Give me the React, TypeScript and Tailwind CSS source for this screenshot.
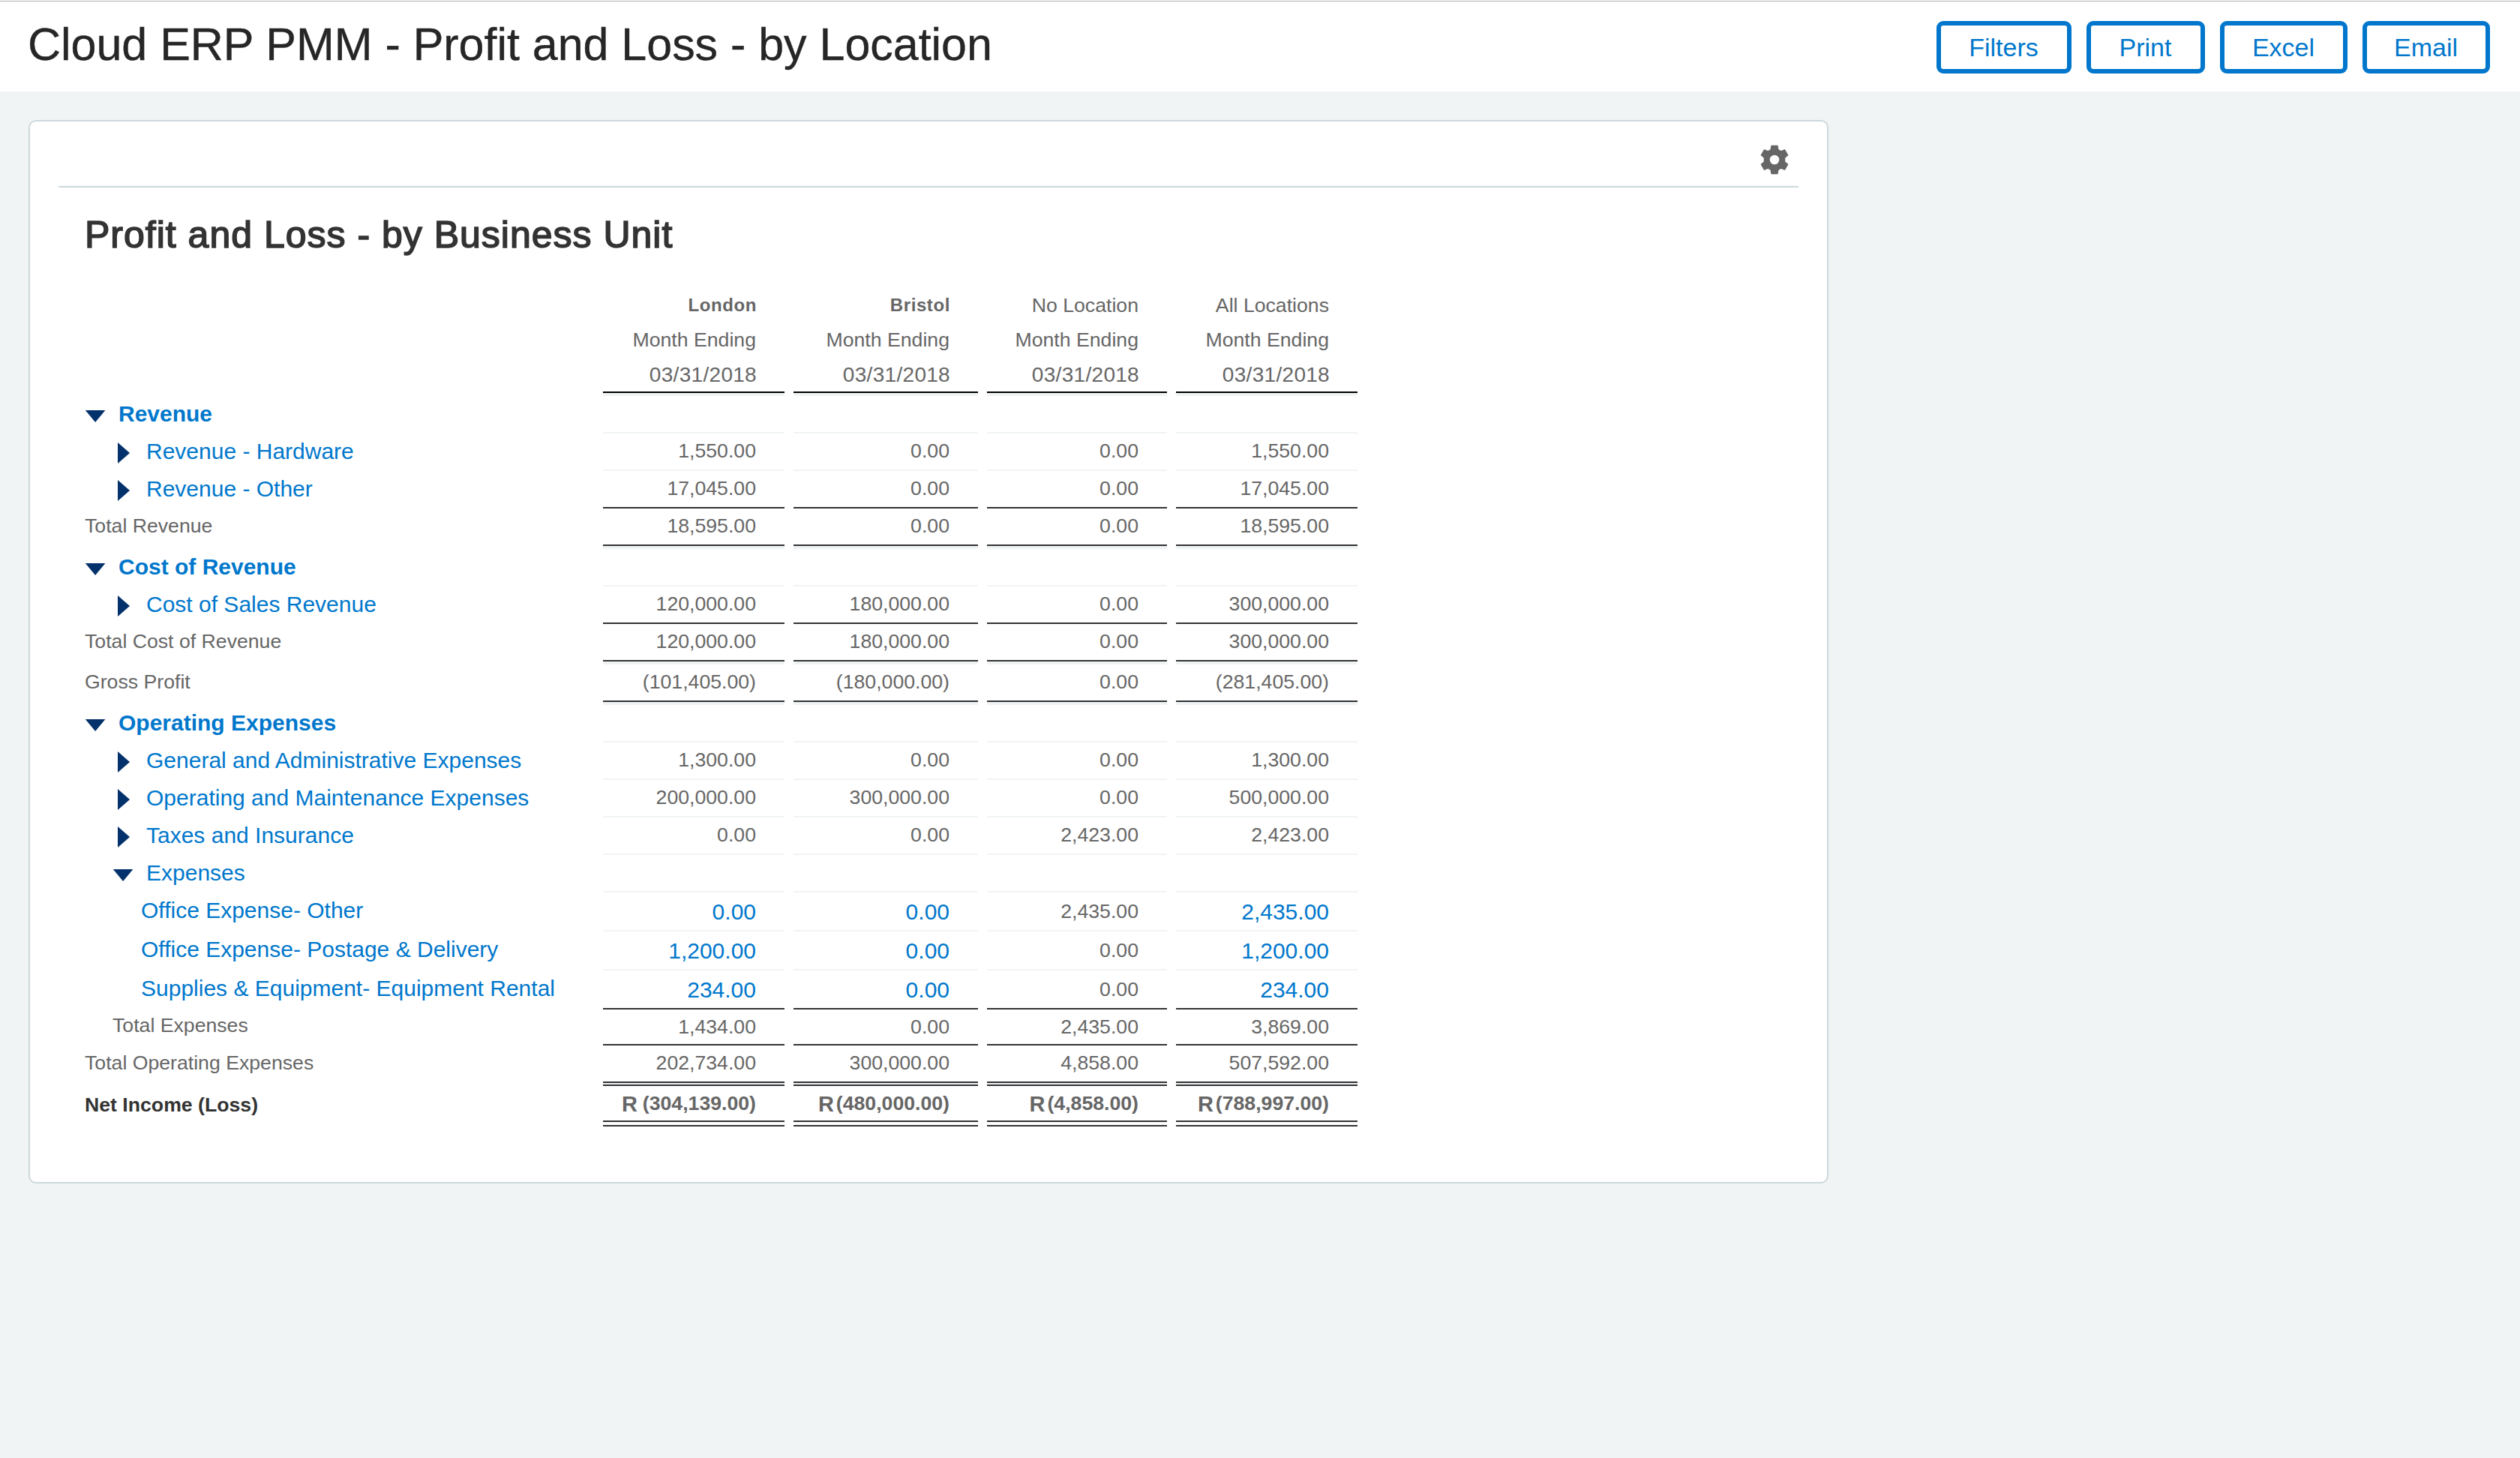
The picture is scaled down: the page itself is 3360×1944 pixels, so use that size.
import React from 'react';

const buttons = [
{
  label: 'Filters',
  width: 'w-[180px]'
},
{
  label: 'Print',
  width: 'w-[158px]'
},
{
  label: 'Excel',
  width: 'w-[170px]'
},
{
  label: 'Email',
  width: 'w-[170px]'
}];

const columns = [
{ name: 'London', bold: true },
{ name: 'Bristol', bold: true },
{ name: 'No Location', bold: false },
{ name: 'All Locations', bold: false }];

type Kind = 'section' | 'group' | 'openGroup' | 'account' | 'subtotal' | 'total' | 'result' | 'net';
type Line = 'light' | 'dark' | 'double' | 'net';

interface Row {
  kind: Kind;
  label: string;
  height: string;
  line: Line;
  values?: string[];
  // top spacer strip shown on the first row of a section
  strip?: boolean;
}

const rows: Row[] = [
{ kind: 'section', label: 'Revenue', height: 'h-[54px]', line: 'light', strip: true },
{ kind: 'group', label: 'Revenue - Hardware', height: 'h-[50px]', line: 'light', values: ['1,550.00', '0.00', '0.00', '1,550.00'] },
{ kind: 'group', label: 'Revenue - Other', height: 'h-[50px]', line: 'dark', values: ['17,045.00', '0.00', '0.00', '17,045.00'] },
{ kind: 'total', label: 'Total Revenue', height: 'h-[50px]', line: 'dark', values: ['18,595.00', '0.00', '0.00', '18,595.00'] },
{ kind: 'section', label: 'Cost of Revenue', height: 'h-[54px]', line: 'light', strip: true },
{ kind: 'group', label: 'Cost of Sales Revenue', height: 'h-[50px]', line: 'dark', values: ['120,000.00', '180,000.00', '0.00', '300,000.00'] },
{ kind: 'total', label: 'Total Cost of Revenue', height: 'h-[50px]', line: 'dark', values: ['120,000.00', '180,000.00', '0.00', '300,000.00'] },
{ kind: 'result', label: 'Gross Profit', height: 'h-[54px]', line: 'dark', strip: true, values: ['(101,405.00)', '(180,000.00)', '0.00', '(281,405.00)'] },
{ kind: 'section', label: 'Operating Expenses', height: 'h-[54px]', line: 'light', strip: true },
{ kind: 'group', label: 'General and Administrative Expenses', height: 'h-[50px]', line: 'light', values: ['1,300.00', '0.00', '0.00', '1,300.00'] },
{ kind: 'group', label: 'Operating and Maintenance Expenses', height: 'h-[50px]', line: 'light', values: ['200,000.00', '300,000.00', '0.00', '500,000.00'] },
{ kind: 'group', label: 'Taxes and Insurance', height: 'h-[50px]', line: 'light', values: ['0.00', '0.00', '2,423.00', '2,423.00'] },
{ kind: 'openGroup', label: 'Expenses', height: 'h-[50px]', line: 'light' },
{ kind: 'account', label: 'Office Expense- Other', height: 'h-[52px]', line: 'light', values: ['0.00', '0.00', '2,435.00', '2,435.00'] },
{ kind: 'account', label: 'Office Expense- Postage & Delivery', height: 'h-[52px]', line: 'light', values: ['1,200.00', '0.00', '0.00', '1,200.00'] },
{ kind: 'account', label: 'Supplies & Equipment- Equipment Rental', height: 'h-[52px]', line: 'dark', values: ['234.00', '0.00', '0.00', '234.00'] },
{ kind: 'subtotal', label: 'Total Expenses', height: 'h-[48px]', line: 'dark', values: ['1,434.00', '0.00', '2,435.00', '3,869.00'] },
{ kind: 'total', label: 'Total Operating Expenses', height: 'h-[54px]', line: 'double', values: ['202,734.00', '300,000.00', '4,858.00', '507,592.00'] },
{ kind: 'net', label: 'Net Income (Loss)', height: 'h-[54px]', line: 'net', values: ['(304,139.00)', '(480,000.00)', '(4,858.00)', '(788,997.00)'] }];

const labelStyles: Record<Kind, string> = {
  section: 'text-[30px] leading-[48px] font-bold text-[#0077cc]',
  group: 'pl-11 text-[30px] leading-[48px] text-[#0077cc]',
  openGroup: 'pl-[37px] text-[30px] leading-[48px] text-[#0077cc]',
  account: 'pl-[75px] text-[30px] leading-[48px] text-[#0077cc]',
  subtotal: 'pl-[37px] text-[26.67px] leading-[42px]',
  total: 'text-[26.67px] leading-[46px]',
  result: 'text-[26.67px] leading-[46px]',
  net: 'text-[26.67px] leading-[50px] font-bold text-[#333333]'
};

const grid = 'grid grid-cols-[679px_242px_246px_240px_242px] gap-x-3';

function ArrowDown() {
  return (
    <svg className="mt-[19px] w-7 h-4 shrink-0" viewBox="0 0 28 16" fill="#03316b">
      <path d="M0.8 0h26.6L14.1 16z" />
    </svg>);

}

function ArrowRight() {
  return (
    <svg className="mt-[12px] w-4 h-7 shrink-0" viewBox="0 0 16 28" fill="#03316b">
      <path d="M0 0L16 14L0 28z" />
    </svg>);

}

function Rule({ line }: {line: Line;}) {
  if (line === 'light') return <div className="h-0.5 bg-[#f0f4f5]" />;
  if (line === 'dark') return <div className="h-0.5 bg-[#333335]" />;
  if (line === 'double') {
    return <div className="h-1.5 border-y-2 border-[#333335] bg-[#f0f4f5]" />;
  }
  return <div className="h-2 border-y-2 border-[#333335]" />;
}

function Amount({ row, index }: {row: Row;index: number;}) {
  const value = row.values?.[index] ?? '';
  if (row.kind === 'net') {
    return (
      <div className="pr-[38px] flex justify-end text-[26.67px] leading-[46px] font-bold">
        <span className={index === 0 ? 'mr-[7px] text-[29px] leading-[48px]' : 'mr-[3px] text-[29px] leading-[48px]'}>R</span>
        <span>{value}</span>
      </div>);

  }
  if (row.kind === 'account') {
    const linked = index !== 2;
    return (
      <div
        className={
        linked ?
        'pr-[38px] text-right text-[30px] leading-[51px] text-[#0077cc]' :
        'pr-[38px] text-right text-[26.67px] leading-[50px]'
        }>
        {value}
      </div>);

  }
  return <div className="pr-[38px] text-right text-[26.67px] leading-[46px]">{value}</div>;
}

function ReportRow({ row }: {row: Row;}) {
  return (
    <div className={`${grid} ${row.height}`}>
      <div className={`flex items-start whitespace-nowrap ${row.strip ? 'pt-1' : ''} ${labelStyles[row.kind]}`}>
        {row.kind === 'section' &&
        <span className="w-[45px] flex">
            <ArrowDown />
          </span>
        }
        {row.kind === 'group' &&
        <span className="w-[38px] flex">
            <ArrowRight />
          </span>
        }
        {row.kind === 'openGroup' &&
        <span className="w-[45px] flex">
            <ArrowDown />
          </span>
        }
        <span>{row.label}</span>
      </div>
      {columns.map((column, index) =>
      <div key={column.name} className="flex flex-col min-h-0">
          {row.strip && <div className="h-1 bg-[#f0f4f5]" />}
          <div className="flex-1 min-h-0">
            <Amount row={row} index={index} />
          </div>
          <Rule line={row.line} />
        </div>
      )}
    </div>);

}

export default function App() {
  return (
    <div className="w-[3360px] h-[1944px] overflow-hidden bg-[#f0f4f5] font-['Liberation_Sans',Arial,sans-serif] text-[#666666]">
      <header className="h-[122px] bg-white pt-px">
        <div className="border-t border-[#b0b4b5] pl-[37px] pr-10 flex items-start justify-between">
          <h1 className="pt-[22px] text-[61px] leading-[70px] tracking-[-0.03px] text-[#262626] [-webkit-text-stroke:0.4px_#262626] whitespace-nowrap">
            Cloud ERP PMM - Profit and Loss - by Location
          </h1>
          <div className="pt-[26px] flex gap-5">
            {buttons.map((button) =>
            <button
              key={button.label}
              className={`${button.width} h-[70px] rounded-[9px] border-[6px] border-[#0077cc] bg-white pr-px text-[34px] leading-[58px] text-[#0077cc]`}>
              
                {button.label}
              </button>
            )}
          </div>
        </div>
      </header>

      <main className="pt-[38px] pl-[38px]">
        <section className="w-[2400px] h-[1418px] rounded-[10px] border-2 border-[#ccd8dc] bg-white px-[38px]">
          <div className="h-[88px] border-b-2 border-[#ccd8dc] flex justify-end pt-[31px] pr-[13px]">
            <svg className="w-[38px] h-[40px]" viewBox="0 0 38 40" fill="#666666">
              <path
                fillRule="evenodd"
                d="M14.5 0.8h9l1 5.4 3.2 1.8 5.2-1.9 4.6 7.9-4.2 3.6v4.8l4.2 3.6-4.6 7.9-5.2-1.9-3.2 1.8-1 5.4h-9l-1-5.4-3.2-1.8-5.2 1.9-4.6-7.9 4.2-3.6v-4.8L0.5 14l4.6-7.9 5.2 1.9 3.2-1.8zM19 13.7a6.3 6.3 0 1 0 0 12.6a6.3 6.3 0 1 0 0-12.6z" />
            </svg>
          </div>

          <div className="pl-[35px]">
            <h2 className="pt-[32px] h-[130px] text-[50px] leading-[62px] tracking-[1px] text-[#333333] [-webkit-text-stroke:1.6px_#333333] whitespace-nowrap">
              Profit and Loss - by Business Unit
            </h2>

            <div className={`${grid} h-[144px]`}>
              <div />
              {columns.map((column) =>
              <div key={column.name} className="border-b-2 border-black pr-[37px] pt-1 text-right whitespace-nowrap">
                  <div className={column.bold ? 'text-[24px] leading-[46px] font-bold tracking-[0.6px]' : 'pr-px text-[26.67px] leading-[46px]'}>
                    {column.name}
                  </div>
                  <div className="pr-px text-[26.67px] leading-[46px]">Month Ending</div>
                  <div className="h-[46px] text-[28px] leading-[47px] tracking-[0.3px]">03/31/2018</div>
                </div>
              )}
            </div>

            {rows.map((row) =>
            <ReportRow key={row.label} row={row} />
            )}
          </div>
        </section>
      </main>
    </div>);

}
